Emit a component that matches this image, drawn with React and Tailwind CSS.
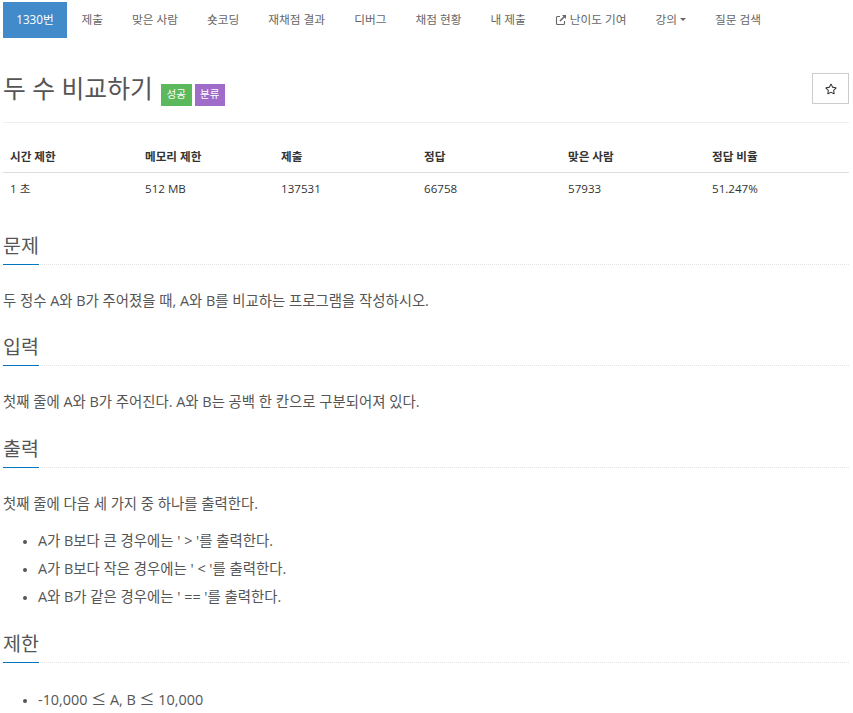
import React from 'react';
import { FaRegStar } from 'react-icons/fa';

const tabs = ['제출', '맞은 사람', '숏코딩', '재채점 결과', '디버그', '채점 현황', '내 제출'];

const Section = ({ title, className, children }) => (
    <section className={className}>
        <div className="flex h-[38px] items-end border-b border-dotted border-[#e3e3e3]">
            <h2 className="-mb-px h-[38px] w-[36px] whitespace-nowrap border-b border-[#0076c0] text-[19.5px] leading-[38px] text-[#555555]">{title}</h2>
        </div>
        <div className="pt-[26px] text-[14.4px] leading-[20px] text-[#555555]">{children}</div>
    </section>
);

const Leq = () => <span className="font-['Noto_Sans_CJK_KR'] text-[15px] leading-[20px]">≤</span>;

export default function App() {
    return (
        <div className="h-[713px] overflow-hidden bg-white pl-[3px] pr-[4px] pt-[2px] font-['Open_Sans','Noto_Sans_CJK_KR',sans-serif] text-[#555555]">
            <nav className="flex h-[36px] items-center text-[11.7px] text-[#666666]">
                <a className="flex h-[36px] w-[64px] items-center justify-center bg-[#428bca] text-white">1330번</a>
                {tabs.map((tab) => (
                    <a key={tab} className="px-[14.5px]">{tab}</a>
                ))}
                <a className="flex items-center gap-[3px] px-[14.5px]">
                    <svg width="12" height="12" viewBox="0 0 12 12" fill="none" stroke="currentColor">
                        <path d="M9.5 7v2.5a1 1 0 0 1-1 1h-6a1 1 0 0 1-1-1v-6a1 1 0 0 1 1-1H5" strokeWidth="1.1" />
                        <path d="M5 7l5-5" strokeWidth="1.6" />
                        <path d="M7 1h4v4z" fill="currentColor" stroke="none" />
                    </svg>
                    난이도 기여
                </a>
                <a className="flex items-center gap-[3px] px-[14.5px]">강의<span className="h-0 w-0 border-x-[3px] border-t-[3px] border-x-transparent border-t-[#666666]" /></a>
                <a className="px-[14.5px]">질문 검색</a>
            </nav>

            <header className="mt-[36px] flex h-[49px] items-start justify-between border-b border-[#eeeeee]">
                <div className="flex items-start">
                    <h1 className="mr-[8px] text-[24.8px] leading-[28px] text-[#555555]">두 수 비교하기</h1>
                    <span className="mr-[3px] mt-[10px] flex h-[22px] w-[31px] items-center justify-center bg-[#5cb85c] text-[10.5px] text-white">성공</span>
                    <span className="mt-[10px] flex h-[22px] w-[30px] items-center justify-center bg-[#a06cc9] text-[10.5px] text-white">분류</span>
                </div>
                <button className="-mt-[1px] flex h-[31px] w-[37px] items-center justify-center border border-[#cccccc]"><FaRegStar size={12} className="text-[#333333]" /></button>
            </header>

            <div className="mt-[19px] text-[11.6px] text-[#333333]">
                <div className="grid h-[31px] grid-cols-[135px_136px_143px_144px_144px_1fr] items-center border-b border-[#dddddd] font-bold">
                    <span className="pl-[7px]">시간 제한</span>
                    <span className="pl-[7px]">메모리 제한</span>
                    <span className="pl-[7px]">제출</span>
                    <span className="pl-[7px]">정답</span>
                    <span className="pl-[7px]">맞은 사람</span>
                    <span className="pl-[7px]">정답 비율</span>
                </div>
                <div className="grid h-[31px] grid-cols-[135px_136px_143px_144px_144px_1fr] items-center">
                    <span className="pl-[7px]">1 초</span>
                    <span className="pl-[7px]">512 MB</span>
                    <span className="pl-[7px]">137531</span>
                    <span className="pl-[7px]">66758</span>
                    <span className="pl-[7px]">57933</span>
                    <span className="pl-[7px]">51.247%</span>
                </div>
            </div>

            <div className="mt-[23px] flex flex-col gap-[17px]">
                <Section title="문제">
                    <p>두 정수 A와 B가 주어졌을 때, A와 B를 비교하는 프로그램을 작성하시오.</p>
                </Section>
                <Section title="입력" className="pb-[1px]">
                    <p>첫째 줄에 A와 B가 주어진다. A와 B는 공백 한 칸으로 구분되어져 있다.</p>
                </Section>
                <Section title="출력">
                    <p>첫째 줄에 다음 세 가지 중 하나를 출력한다.</p>
                    <ul className="mb-[1px] mt-[17px] flex list-disc flex-col gap-[8px] pl-[35px] marker:text-[12px]">
                        <li>A가 B보다 큰 경우에는 ' &gt; '를 출력한다.</li>
                        <li>A가 B보다 작은 경우에는 ' &lt; '를 출력한다.</li>
                        <li>A와 B가 같은 경우에는 ' == '를 출력한다.</li>
                    </ul>
                </Section>
                <Section title="제한">
                    <ul className="list-disc pl-[35px] marker:text-[12px]">
                        <li>-10,000 <Leq /> A, B <Leq /> 10,000</li>
                    </ul>
                </Section>
            </div>
        </div>
    );
}
